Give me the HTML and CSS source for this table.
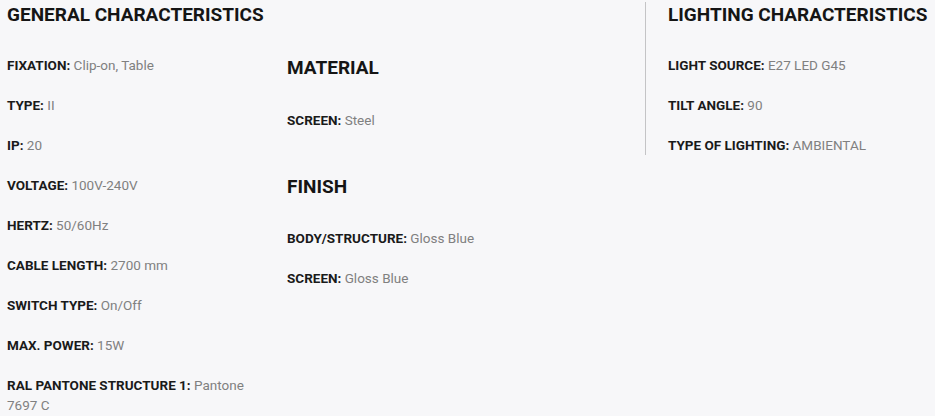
FILE: index.html
```html
<!DOCTYPE html>
<html>
<head>
<meta charset="utf-8">
<link rel="stylesheet" href="styles.css">
</head>
<body>
<div class="specs">
  <section class="col col-general">
    <h2 class="title">GENERAL CHARACTERISTICS</h2>
    <ul class="list">
      <li><b>FIXATION:</b> <span>Clip-on, Table</span></li>
      <li><b>TYPE:</b> <span>II</span></li>
      <li><b>IP:</b> <span>20</span></li>
      <li><b>VOLTAGE:</b> <span>100V-240V</span></li>
      <li><b>HERTZ:</b> <span>50/60Hz</span></li>
      <li><b>CABLE LENGTH:</b> <span>2700 mm</span></li>
      <li><b>SWITCH TYPE:</b> <span>On/Off</span></li>
      <li><b>MAX. POWER:</b> <span>15W</span></li>
      <li><b>RAL PANTONE STRUCTURE 1:</b> <span>Pantone 7697 C</span></li>
    </ul>
  </section>
  <section class="col col-material">
    <h2 class="title sub">MATERIAL</h2>
    <ul class="list">
      <li><b>SCREEN:</b> <span>Steel</span></li>
    </ul>
    <h2 class="title sub finish">FINISH</h2>
    <ul class="list">
      <li><b>BODY/STRUCTURE:</b> <span>Gloss Blue</span></li>
      <li><b>SCREEN:</b> <span>Gloss Blue</span></li>
    </ul>
  </section>
  <section class="col col-lighting">
    <h2 class="title">LIGHTING CHARACTERISTICS</h2>
    <ul class="list">
      <li><b>LIGHT SOURCE:</b> <span>E27 LED G45</span></li>
      <li><b>TILT ANGLE:</b> <span>90</span></li>
      <li><b>TYPE OF LIGHTING:</b> <span>AMBIENTAL</span></li>
    </ul>
  </section>
</div>
</body>
</html>
```
FILE: styles.css
```css
html, body {
  margin: 0;
  padding: 0;
  background: #f7f7f9;
}
body {
  font-family: Roboto, "Liberation Sans", Arial, sans-serif;
  color: #151515;
}
.specs {
  display: grid;
  grid-template-columns: 280px 358px 1fr;
  align-items: start;
  padding: 4px 0 0 7px;
}
.title {
  margin: 0;
  font-size: 19px;
  line-height: 22px;
  font-weight: 700;
  white-space: nowrap;
  color: #151515;
}
.list {
  list-style: none;
  margin: 29px 0 0;
  padding: 0;
}
.list li {
  font-size: 13.5px;
  line-height: 20px;
  margin-bottom: 20px;
}
.list li:last-child {
  margin-bottom: 0;
}
.list b {
  font-weight: 700;
  color: #1a1a1a;
}
.list span {
  color: #808080;
}
.col-general {
  padding-right: 20px;
}
.col-material .sub {
  margin-top: 53px;
}
.col-material .list {
  margin-top: 31px;
}
.col-material .finish {
  margin-top: 46px;
}
.col-material .finish + .list {
  margin-top: 30px;
}
.col-lighting {
  border-left: 1px solid #c4c4c6;
  margin-top: -2px;
  padding: 2px 0 0 22px;
}
```
